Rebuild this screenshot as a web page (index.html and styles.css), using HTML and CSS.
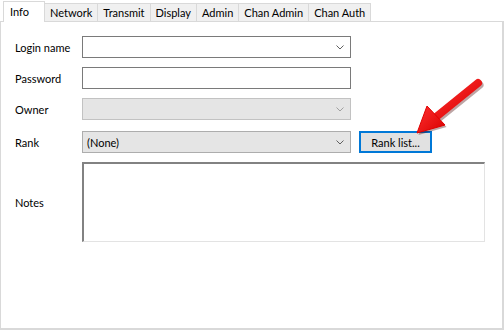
FILE: index.html
```html
<!DOCTYPE html>
<html lang="en">
<head>
    <meta charset="UTF-8">
    <title>User Info</title>
    <link rel="stylesheet" href="styles.css">
</head>
<body>
    <div class="dialog">
        <div class="tabs">
            <div class="tab active">Info</div>
            <div class="tab">Network</div>
            <div class="tab">Transmit</div>
            <div class="tab">Display</div>
            <div class="tab">Admin</div>
            <div class="tab">Chan Admin</div>
            <div class="tab">Chan Auth</div>
        </div>
        <div class="panel">
            <div class="row">
                <label>Login name</label>
                <div class="combo">
                    <span class="value"></span>
                    <svg class="chev" width="8" height="5" viewBox="0 0 8 5"><polyline points="0.5,0.5 4,4 7.5,0.5" fill="none" stroke="#606060" stroke-width="1"/></svg>
                </div>
            </div>
            <div class="row">
                <label>Password</label>
                <div class="textbox"></div>
            </div>
            <div class="row">
                <label>Owner</label>
                <div class="combo disabled">
                    <span class="value"></span>
                    <svg class="chev" width="8" height="5" viewBox="0 0 8 5"><polyline points="0.5,0.5 4,4 7.5,0.5" fill="none" stroke="#a0a0a0" stroke-width="1"/></svg>
                </div>
            </div>
            <div class="row rank-row">
                <label>Rank</label>
                <div class="combo list">
                    <span class="value">(None)</span>
                    <svg class="chev" width="8" height="5" viewBox="0 0 8 5"><polyline points="0.5,0.5 4,4 7.5,0.5" fill="none" stroke="#606060" stroke-width="1"/></svg>
                </div>
                <button class="btn">Rank list...</button>
            </div>
            <div class="row notes-row">
                <label>Notes</label>
                <div class="memo"></div>
            </div>
        </div>

        <svg class="arrow" width="90" height="80" viewBox="0 0 90 80">
            <defs>
                <linearGradient id="red" x1="0" y1="0" x2="1" y2="1">
                    <stop offset="0" stop-color="#ff3030"/>
                    <stop offset="1" stop-color="#d80000"/>
                </linearGradient>
            </defs>
            <g transform="translate(1.5,2)" opacity="0.35">
                <line x1="74" y1="13" x2="32" y2="47" stroke="#400" stroke-width="8" stroke-linecap="round"/>
                <polygon points="13,63 23,36 41,55" fill="#400"/>
            </g>
            <line x1="74" y1="13" x2="32" y2="47" stroke="url(#red)" stroke-width="8" stroke-linecap="round"/>
            <polygon points="13,63 23,36 41,55" fill="url(#red)" stroke="#e00000" stroke-width="1" stroke-linejoin="round"/>
        </svg>
    </div>
</body>
</html>
```

FILE: styles.css
```css
body {
    margin: 0;
    background-color: #ffffff;
    font-family: "Lato", "Liberation Sans", Arial, sans-serif;
    font-size: 11px;
    color: #000;
}
.dialog {
    position: relative;
    width: 504px;
    height: 330px;
}
.tabs {
    display: flex;
    align-items: flex-end;
    height: 21px;
    padding-left: 3px;
}
.tab {
    height: 18px;
    line-height: 17px;
    padding: 0 5px;
    background-color: #f0f0f0;
    border: 1px solid #d9d9d9;
    border-bottom: none;
    border-left: none;
    box-sizing: border-box;
}
.tab.active {
    height: 21px;
    width: 42px;
    padding: 0 6px;
    background-color: #ffffff;
    border-left: 1px solid #d9d9d9;
    line-height: 20px;
    position: relative;
    top: 1px;
}
.panel {
    height: 309px;
    box-sizing: border-box;
    border: 1px solid #d9d9d9;
    border-right-width: 2px;
    border-bottom-width: 2px;
    padding: 14px 0 0 14px;
    display: flex;
    flex-direction: column;
    gap: 9px;
}
.row {
    display: flex;
    align-items: center;
    height: 22px;
}
.row label {
    width: 67px;
    flex: none;
}
.rank-row {
    margin-top: 2px;
}
.combo, .textbox {
    width: 269px;
    height: 22px;
    box-sizing: border-box;
    border: 1px solid #7a7a7a;
    background: #fff;
    display: flex;
    align-items: center;
    padding: 0 6px 0 4px;
}
.combo .value {
    flex: 1;
}
.combo.disabled {
    border-color: #c2c2c2;
    background-color: #e5e5e5;
}
.combo.list {
    border-color: #adadad;
    background-color: #e5e5e5;
}
.chev {
    display: block;
}
.btn {
    margin-left: 8px;
    width: 73px;
    height: 22px;
    box-sizing: border-box;
    border: 2px solid #0078d7;
    background-color: #e1e1e1;
    font-family: inherit;
    font-size: 11px;
    color: #000;
    padding: 0;
}
.notes-row {
    height: 80px;
}
.memo {
    width: 403px;
    height: 80px;
    box-sizing: border-box;
    border-top: 2px solid #828282;
    border-left: 2px solid #828282;
    border-right: 1px solid #e3e3e3;
    border-bottom: 1px solid #e3e3e3;
    background: #fff;
}
.arrow {
    position: absolute;
    left: 404px;
    top: 70px;
}
```
